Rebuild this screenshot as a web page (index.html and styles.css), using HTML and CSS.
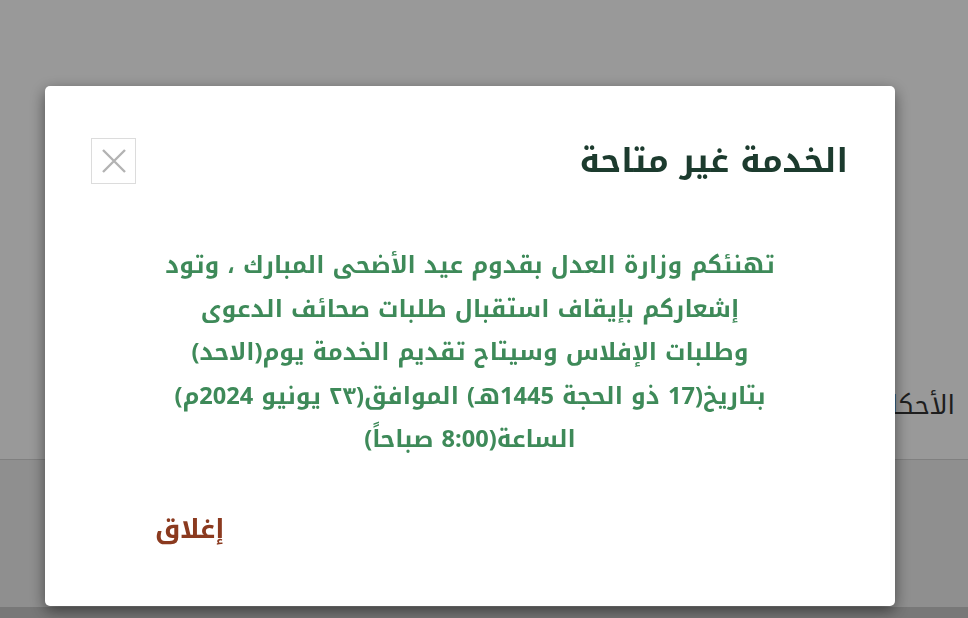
FILE: index.html
```html
<!DOCTYPE html>
<html lang="ar" dir="rtl">
<head>
<meta charset="utf-8">
<link rel="stylesheet" href="styles.css">
</head>
<body>
<div class="page">
  <div class="page-top"></div>
  <div class="page-row"><span class="page-text">الأحكام القضائية</span></div>
  <div class="page-rest"></div>
  <div class="page-bottom"></div>
</div>
<div class="backdrop">
  <div class="modal">
    <div class="modal-header">
      <h2 class="modal-title">الخدمة غير متاحة</h2>
      <button class="close-btn" aria-label="إغلاق">
        <svg width="26" height="26" viewBox="0 0 26 26"><path d="M2 2 L24 24 M24 2 L2 24" stroke="#b3b3b3" stroke-width="2.4" fill="none"/></svg>
      </button>
    </div>
    <div class="modal-body">
      <p class="message">تهنئكم وزارة العدل بقدوم عيد الأضحى المبارك ، وتود<br>إشعاركم بإيقاف استقبال طلبات صحائف الدعوى<br>وطلبات الإفلاس وسيتاح تقديم الخدمة يوم(الاحد)<br>بتاريخ(17 ذو الحجة 1445هـ) الموافق(٢٣ يونيو 2024م)<br>الساعة(8:00 صباحاً)</p>
    </div>
    <div class="modal-footer">
      <a class="close-link" href="#">إغلاق</a>
    </div>
  </div>
</div>
</body>
</html>
```

FILE: styles.css
```css
html, body {
  margin: 0;
  padding: 0;
  height: 100%;
}
body {
  background: #ffffff;
  font-family: "Noto Kufi Arabic", "Noto Sans Arabic", "DejaVu Sans", sans-serif;
  overflow: hidden;
}
.page {
  display: flex;
  flex-direction: column;
  height: 100%;
}
.page-top {
  height: 380px;
}
.page-row {
  height: 79px;
  border-bottom: 1px solid #d6d6d6;
  padding-right: 13px;
  display: flex;
  align-items: flex-start;
}
.page-text {
  font-size: 26px;
  color: #333333;
  line-height: 52px;
  white-space: nowrap;
}
.page-rest {
  flex: 1;
  background: #eeeeee;
}
.page-bottom {
  height: 11px;
  background: #c8c8c8;
}
.backdrop {
  position: fixed;
  inset: 0;
  background: rgba(0, 0, 0, 0.4);
  direction: ltr;
  padding: 86px 0 0 45px;
}
.modal {
  direction: rtl;
  width: 850px;
  height: 520px;
  box-sizing: border-box;
  background: #ffffff;
  border-radius: 5px;
  box-shadow: 0 5px 15px rgba(0, 0, 0, 0.5);
  display: flex;
  flex-direction: column;
}
.modal-header {
  display: flex;
  justify-content: space-between;
  align-items: center;
  padding: 52px 47px 0 46px;
}
.modal-title {
  margin: 0;
  font-size: 33px;
  font-weight: bold;
  color: #1c3b2e;
  line-height: 45px;
}
.close-btn {
  width: 45px;
  height: 46px;
  box-sizing: border-box;
  border: 1px solid #dcdcdc;
  background: #ffffff;
  padding: 0;
  display: flex;
  align-items: center;
  justify-content: center;
}
.modal-body {
  padding: 60px 40px 0;
}
.message {
  margin: 0;
  text-align: center;
  font-size: 23.6px;
  line-height: 43.5px;
  color: #3e8a59;
  font-weight: bold;
}
.modal-footer {
  padding: 42px 0 0 110px;
  direction: ltr;
  text-align: left;
}
.close-link {
  font-size: 26.5px;
  color: #8b3a1f;
  text-decoration: none;
  font-weight: bold;
}
```
